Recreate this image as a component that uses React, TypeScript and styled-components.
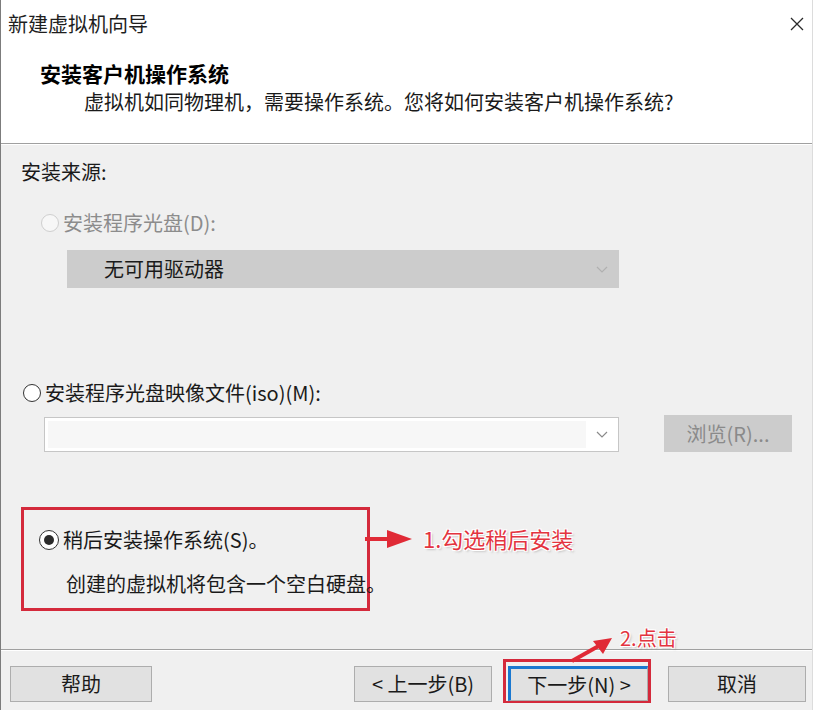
import React from "react";
import styled, { createGlobalStyle } from "styled-components";

const GlobalStyle = createGlobalStyle`
  html, body {
    margin: 0;
    padding: 0;
    background: #f0f0f0;
  }
  body {
    font-family: "Noto Sans CJK SC", "Microsoft YaHei", sans-serif;
    color: #1a1a1a;
  }
  * {
    box-sizing: border-box;
  }
`;

const Window = styled.div`
  position: relative;
  width: 813px;
  height: 710px;
  display: flex;
  flex-direction: column;
  background: #f0f0f0;
  border-left: 1px solid #7c7c7c;
  border-right: 1px solid #dcdcdc;
  overflow: hidden;
`;

const Header = styled.div`
  height: 143px;
  background: #ffffff;
  display: flex;
  flex-direction: column;
`;

const TitleBar = styled.div`
  height: 48px;
  display: flex;
  align-items: center;
  justify-content: space-between;
  padding: 0 8px 0 7px;
`;

const WindowTitle = styled.div`
  font-size: 20px;
  line-height: 20px;
  color: #1e1e1e;
`;

const Heading = styled.div`
  margin-top: 15px;
  padding-left: 39px;
  font-size: 21px;
  line-height: 21px;
  font-weight: bold;
  color: #000;
`;

const SubHeading = styled.div`
  margin-top: 8px;
  padding-left: 83px;
  font-size: 20px;
  line-height: 20px;
  color: #1a1a1a;
`;

const Divider = styled.div`
  height: 2px;
  border-top: 1px solid #a0a0a0;
  border-bottom: 1px solid #ffffff;
`;

const Body = styled.div`
  flex: 1;
  display: flex;
  flex-direction: column;
  align-items: flex-start;
  padding: 0 20px;
`;

const SectionLabel = styled.div`
  margin-top: 17px;
  font-size: 20px;
  line-height: 20px;
`;

const RadioRow = styled.label<{ $top: number; $left: number; $disabled?: boolean }>`
  margin-top: ${(p) => p.$top}px;
  margin-left: ${(p) => p.$left}px;
  display: flex;
  align-items: center;
  gap: 4px;
  font-size: 20px;
  line-height: 24px;
  white-space: nowrap;
  color: ${(p) => (p.$disabled ? "#8c8c8c" : "#1a1a1a")};
`;

const Radio = styled.span<{ $checked?: boolean; $disabled?: boolean; $size: number }>`
  position: relative;
  width: ${(p) => p.$size}px;
  height: ${(p) => p.$size}px;
  border-radius: 50%;
  border: 1.5px solid ${(p) => (p.$disabled ? "#cfcfcf" : "#333333")};
  background: ${(p) => (p.$disabled ? "#f7f7f7" : "#ffffff")};
  flex-shrink: 0;

  &::after {
    content: "";
    display: ${(p) => (p.$checked ? "block" : "none")};
    position: absolute;
    left: 50%;
    top: 50%;
    width: 10px;
    height: 10px;
    margin: -5px 0 0 -5px;
    border-radius: 50%;
    background: #2b2b2b;
  }
`;

const Select = styled.div<{ $disabled?: boolean; $top: number; $left: number; $width: number; $height: number }>`
  margin-top: ${(p) => p.$top}px;
  margin-left: ${(p) => p.$left}px;
  width: ${(p) => p.$width}px;
  height: ${(p) => p.$height}px;
  display: flex;
  align-items: center;
  background: ${(p) => (p.$disabled ? "#cccccc" : "#ffffff")};
  border: 1px solid ${(p) => (p.$disabled ? "#cccccc" : "#c6c6c6")};
  font-size: 20px;
  color: #1a1a1a;
`;

const SelectText = styled.div`
  flex: 1;
  padding-left: 36px;
  line-height: 20px;
`;

const SelectField = styled.div`
  flex: 1;
  align-self: stretch;
  margin: 3px 0 3px 3px;
  background: #f7f7f7;
`;

const Chevron = styled.div`
  width: 32px;
  display: flex;
  justify-content: center;
  align-items: center;
`;

const ComboRow = styled.div`
  margin-top: 10px;
  margin-left: 23px;
  display: flex;
  align-items: flex-start;
  gap: 45px;
`;

const Button = styled.button<{ $width: number; $disabled?: boolean }>`
  width: ${(p) => p.$width}px;
  height: 36px;
  padding: 0;
  background: ${(p) => (p.$disabled ? "#cccccc" : "#e1e1e1")};
  border: 1px solid ${(p) => (p.$disabled ? "#cccccc" : "#adadad")};
  font-family: inherit;
  font-size: 20px;
  line-height: 20px;
  color: ${(p) => (p.$disabled ? "#8a8a8a" : "#1a1a1a")};
  cursor: default;
`;

const BrowseButton = styled(Button)`
  height: 37px;
`;

const HighlightBox = styled.div`
  position: relative;
  margin-top: 55px;
  width: 349px;
  height: 104px;
  border: 3px solid #d42a3c;
  display: flex;
  flex-direction: column;
  padding: 18px 0 0 15px;
`;

const Note = styled.div`
  margin-top: 22px;
  padding-left: 27px;
  font-size: 20px;
  line-height: 20px;
  white-space: nowrap;
`;

const Annotation = styled.div<{ $size: number }>`
  position: absolute;
  white-space: nowrap;
  font-size: ${(p) => p.$size}px;
  line-height: ${(p) => p.$size}px;
  color: #e3343f;
  text-shadow: 1px 1px 0 #fff, -1px -1px 0 #fff, 1px -1px 0 #fff, -1px 1px 0 #fff,
    2px 2px 2px rgba(120, 120, 120, 0.35);
`;

const ArrowMark = styled.svg`
  position: absolute;
  overflow: visible;
`;

const Footer = styled.div`
  height: 59px;
  display: flex;
  align-items: flex-end;
  padding: 0 6px 8px 9px;
`;

const Spacer = styled.div`
  flex: 1;
`;

const NextWrap = styled.div`
  position: relative;
  margin: 0 17px -1px 11px;
  padding: 4px 0 0 2px;
  border: 3px solid #d42a3c;
  border-bottom-width: 2px;
`;

const NextButton = styled(Button)`
  height: 35px;
  border-top: 3px solid #1a78d0;
  border-left: 3px solid #1a78d0;
`;

const ChevronIcon: React.FC<{ color: string }> = ({ color }) => (
  <svg width="12" height="7" viewBox="0 0 12 7">
    <path d="M1 1 L6 6 L11 1" fill="none" stroke={color} strokeWidth="1.2" />
  </svg>
);

const App: React.FC = () => {
  return (
    <Window>
      <GlobalStyle />
      <Header>
        <TitleBar>
          <WindowTitle>新建虚拟机向导</WindowTitle>
          <svg width="14" height="14" viewBox="0 0 14 14">
            <path d="M1 1 L13 13 M13 1 L1 13" stroke="#2a2a2a" strokeWidth="1.3" />
          </svg>
        </TitleBar>
        <Heading>安装客户机操作系统</Heading>
        <SubHeading>虚拟机如同物理机，需要操作系统。您将如何安装客户机操作系统?</SubHeading>
      </Header>
      <Divider />
      <Body>
        <SectionLabel>安装来源:</SectionLabel>

        <RadioRow $top={29} $left={20} $disabled>
          <Radio $size={18} $disabled />
          <span>安装程序光盘(D):</span>
        </RadioRow>
        <Select $disabled $top={15} $left={46} $width={552} $height={38}>
          <SelectText>无可用驱动器</SelectText>
          <Chevron>
            <ChevronIcon color="#b0b0b0" />
          </Chevron>
        </Select>

        <RadioRow $top={93} $left={2}>
          <Radio $size={18} />
          <span>安装程序光盘映像文件(iso)(M):</span>
        </RadioRow>
        <ComboRow>
          <Select $top={2} $left={0} $width={575} $height={35}>
            <SelectField />
            <Chevron>
              <ChevronIcon color="#8a8a8a" />
            </Chevron>
          </Select>
          <BrowseButton $width={128} $disabled>
            浏览(R)...
          </BrowseButton>
        </ComboRow>

        <HighlightBox>
          <RadioRow $top={0} $left={0}>
            <Radio $size={20} $checked />
            <span>稍后安装操作系统(S)。</span>
          </RadioRow>
          <Note>创建的虚拟机将包含一个空白硬盘。</Note>
          <ArrowMark width="48" height="20" style={{ left: 341, top: 19 }}>
            <path d="M0 10 L28 10" stroke="#e02a36" strokeWidth="4" />
            <path d="M22 1 L47 10 L22 19 Z" fill="#e02a36" />
          </ArrowMark>
          <Annotation $size={22} style={{ left: 399, top: 17 }}>
            1.勾选稍后安装
          </Annotation>
        </HighlightBox>
      </Body>
      <Divider />
      <Footer>
        <Button $width={142}>帮助</Button>
        <Spacer />
        <Button $width={138}>&lt; 上一步(B)</Button>
        <NextWrap>
          <NextButton $width={140}>下一步(N) &gt;</NextButton>
          <ArrowMark width="44" height="26" style={{ left: 64, top: -25 }}>
            <path d="M2 24 L34 6" stroke="#e02a36" strokeWidth="4" />
            <path d="M42 1 L23 4 L33 17 Z" fill="#e02a36" />
          </ArrowMark>
          <Annotation $size={20} style={{ left: 114, top: -34 }}>
            2.点击
          </Annotation>
        </NextWrap>
        <Button $width={138}>取消</Button>
      </Footer>
    </Window>
  );
};

export default App;
